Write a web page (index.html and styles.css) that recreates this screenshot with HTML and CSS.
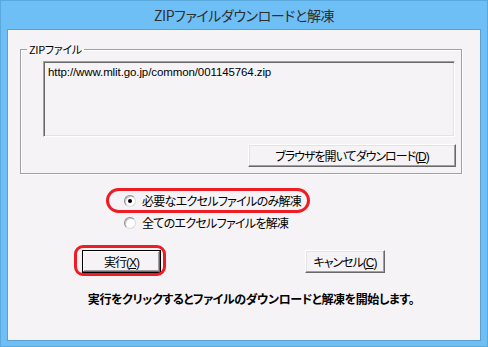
FILE: index.html
```html
<!DOCTYPE html>
<html lang="ja">
<head>
<meta charset="utf-8">
<link rel="stylesheet" href="styles.css">
</head>
<body>
<div class="window">
  <div class="titlebar">ZIPファイルダウンロードと解凍</div>
  <div class="client">
    <fieldset class="group">
      <legend class="legend">ZIPファイル</legend>
      <div class="urlbox">http://www.mlit.go.jp/common/001145764.zip</div>
      <div class="btnrow-right">
        <button class="btn btn-browse">ブラウザを開いてダウンロード(<u>D</u>)</button>
      </div>
    </fieldset>
    <div class="radios">
      <label class="radio-row highlighted"><span class="radio checked"></span><span class="rlabel">必要なエクセルファイルのみ解凍</span></label>
      <label class="radio-row"><span class="radio"></span><span class="rlabel">全てのエクセルファイルを解凍</span></label>
    </div>
    <div class="actions">
      <button class="btn btn-default btn-exec highlighted-btn">実行(<u>X</u>)</button>
      <button class="btn btn-cancel">キャンセル(<u>C</u>)</button>
    </div>
    <p class="message">実行をクリックするとファイルのダウンロードと解凍を開始します。</p>
  </div>
</div>
</body>
</html>
```
FILE: styles.css
```css
html, body {
  margin: 0;
  padding: 0;
}
body {
  width: 488px;
  height: 347px;
  overflow: hidden;
  background: #6ebff6;
  font-family: "Liberation Sans", "Noto Sans CJK JP", sans-serif;
  font-size: 12px;
  color: #000;
}
.window {
  width: 488px;
  height: 347px;
  display: flex;
  flex-direction: column;
  background: #6ebff6;
  box-shadow: inset 0 1px #5aa9dd, inset 1px 0 #5aa9dd, inset -1px 0 #5aa9dd, inset 0 -1px #5aa9dd;
}
.titlebar {
  height: 30px;
  line-height: 30px;
  text-align: center;
  font-family: "Noto Sans CJK JP", sans-serif;
  font-size: 14px;
  letter-spacing: -0.4px;
  color: #2e2e2e;
  font-feature-settings: "palt";
}
.client {
  margin: 0 8px 7px 8px;
  height: 310px;
  background: #f6f3f6;
  box-shadow: 0 0 0 1px #5c9fcf;
  display: flex;
  flex-direction: column;
}
.group {
  margin: 12px 18px 0 12px;
  padding: 5px 5px 6px 22px;
  border: 1px solid #a0a0a0;
  box-shadow: 1px 1px 0 #fff, inset 1px 1px 0 #fff;
  min-width: 0;
}
.legend {
  margin-left: -16px;
  padding: 0 2px;
  line-height: 14px;
  font-family: "Noto Sans CJK JP", sans-serif;
  font-size: 11px;
  letter-spacing: -0.3px;
  font-feature-settings: "palt";
}
.urlbox {
  box-sizing: border-box;
  width: 412px;
  height: 76px;
  padding: 3px 4px;
  border: 1px solid;
  border-color: #a0a0a0 #fff #fff #a0a0a0;
  box-shadow: inset 1px 1px 0 #696969, inset -1px -1px 0 #e3e3e3;
  background: #f6f3f6;
  font-size: 11.5px;
  line-height: 14px;
  letter-spacing: -0.1px;
}
.btnrow-right {
  display: flex;
  justify-content: flex-end;
  margin-top: 7px;
}
.btn {
  box-sizing: border-box;
  height: 23px;
  padding: 0;
  background: #f6f3f6;
  border: 1px solid;
  border-color: #fff #696969 #696969 #fff;
  box-shadow: inset -1px -1px 0 #a0a0a0, inset 1px 1px 0 #e3e3e3;
  font-family: "Liberation Sans", "Noto Sans CJK JP", sans-serif;
  font-size: 12px;
  color: #000;
  font-feature-settings: "palt";
  letter-spacing: -1px;
}
.btn u {
  text-underline-offset: 1px;
}
.btn-browse {
  width: 208px;
}
.radios {
  display: flex;
  flex-direction: column;
  margin: 16px 0 0 116px;
}
.radio-row {
  position: relative;
  display: flex;
  align-items: center;
  height: 22px;
  gap: 6px;
  font-family: "Noto Sans CJK JP", sans-serif;
  font-feature-settings: "palt";
  letter-spacing: -0.7px;
}
.rlabel {
  line-height: 14px;
}
.radio {
  box-sizing: border-box;
  width: 12px;
  height: 12px;
  border-radius: 50%;
  background: #fff;
  border: 1px solid;
  border-color: #8c8c8c #dcdcdc #dcdcdc #8c8c8c;
  box-shadow: inset 1px 1px 0 #c8c8c8;
  display: flex;
  align-items: center;
  justify-content: center;
}
.radio.checked::after {
  content: "";
  width: 4px;
  height: 4px;
  border-radius: 50%;
  background: #000;
}
.highlighted::before {
  content: "";
  position: absolute;
  left: -18px;
  top: -2px;
  width: 204px;
  height: 25px;
  box-sizing: border-box;
  border: 3px solid #ee1c24;
  border-radius: 13px;
}
.actions {
  display: flex;
  margin: 16px 0 0 74px;
}
.btn-exec {
  position: relative;
  width: 79px;
  border: 1px solid #000;
  box-shadow: inset -1px -1px 0 #696969, inset 1px 1px 0 #fff, inset -2px -2px 0 #a0a0a0;
}
.highlighted-btn::before {
  content: "";
  position: absolute;
  left: -9px;
  top: -6px;
  width: 92px;
  height: 31px;
  box-sizing: border-box;
  border: 3px solid #ee1c24;
  border-radius: 9px;
}
.btn-cancel {
  width: 80px;
  margin-left: 144px;
}
.message {
  margin: 18px 0 0 0;
  padding-left: 14px;
  text-align: center;
  font-family: "Noto Sans CJK JP", sans-serif;
  font-weight: bold;
  font-size: 12px;
  line-height: 16px;
  letter-spacing: -0.4px;
  font-feature-settings: "palt";
}
```
